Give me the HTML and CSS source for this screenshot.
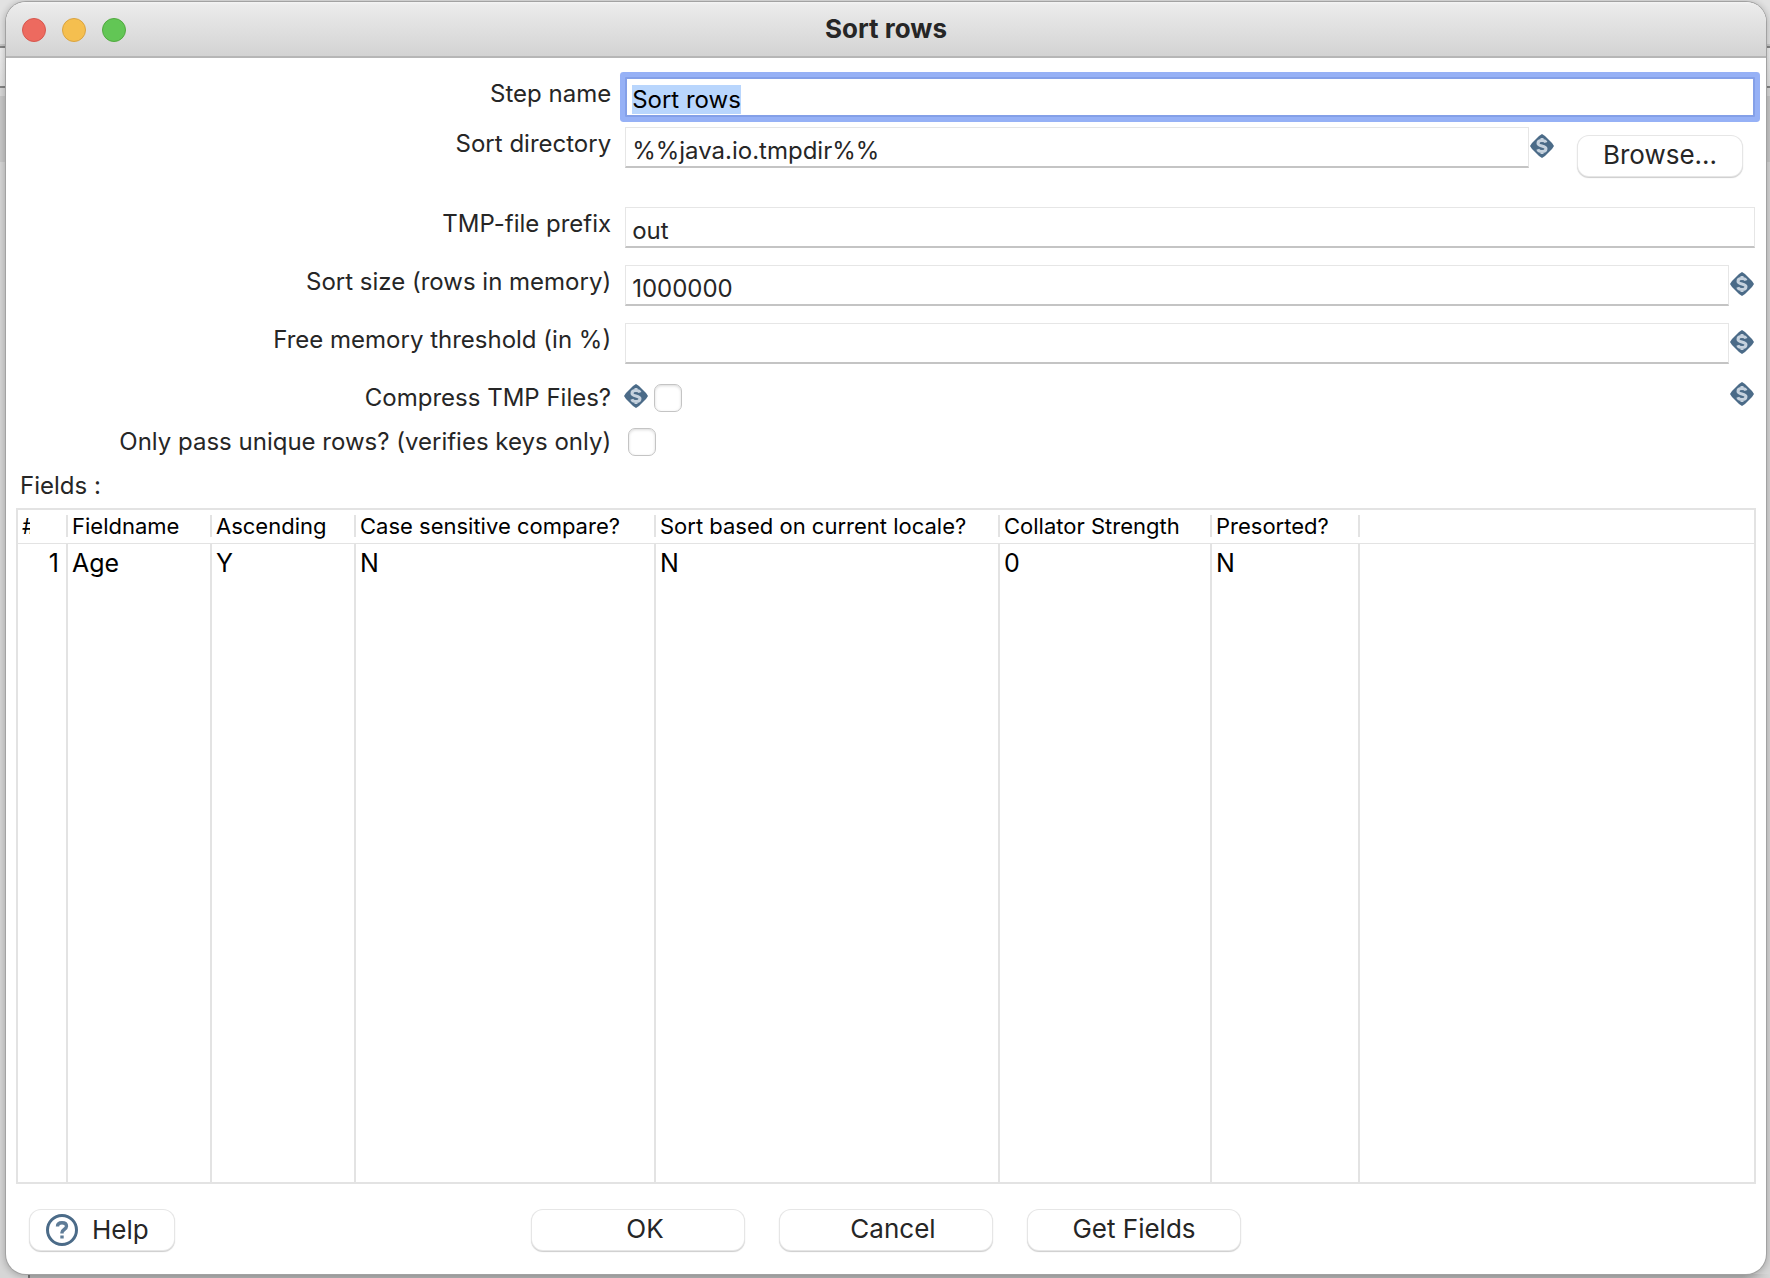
FILE: index.html
```html
<!DOCTYPE html>
<html lang="en">
<head>
<meta charset="utf-8">
<title>Sort rows</title>
<link rel="stylesheet" href="styles.css">
</head>
<body>
<svg class="defs" width="0" height="0" aria-hidden="true">
  <symbol id="variable" viewBox="0 0 24 24">
    <path d="M12 0 L15 2 L22 9 L24 12 L22 15 L15 22 L12 24 L9 22 L2 15 L0 12 L2 9 L9 2 Z" fill="#4b6b88"/>
    <path d="M16 8.500C15.500 7 14 6.500 12 6.500C9.500 6.500 8 7.500 8 9.200C8 13 16 10.800 16 14.800C16 16.500 14.500 17.500 12 17.500C9.800 17.500 8.300 16.800 7.800 15.300M12 4V6.500M12 17.500V20" fill="none" stroke="#c6d2de" stroke-width="3"/>
  </symbol>
</svg>
<main class="window">
  <header class="titlebar">
    <div class="lights">
      <button class="light light-close" type="button" aria-label="Close"></button>
      <button class="light light-minimize" type="button" aria-label="Minimize"></button>
      <button class="light light-zoom" type="button" aria-label="Zoom"></button>
    </div>
    <h1 class="title">Sort rows</h1>
  </header>
  <form class="form">
    <div class="row row-step">
      <label class="label" for="step">Step name</label>
      <div class="control"><input class="text text-focus" id="step" type="text" value="Sort rows"></div>
    </div>
    <div class="row row-directory">
      <label class="label" for="directory">Sort directory</label>
      <div class="control">
        <input class="text" id="directory" type="text" value="%%java.io.tmpdir%%">
        <svg class="variable"><use href="#variable"/></svg>
        <button class="button browse" type="button">Browse...</button>
      </div>
    </div>
    <div class="row">
      <label class="label" for="prefix">TMP-file prefix</label>
      <div class="control"><input class="text" id="prefix" type="text" value="out"></div>
    </div>
    <div class="row">
      <label class="label" for="size">Sort size (rows in memory)</label>
      <div class="control">
        <input class="text" id="size" type="text" value="1000000">
        <svg class="variable"><use href="#variable"/></svg>
      </div>
    </div>
    <div class="row">
      <label class="label" for="threshold">Free memory threshold (in %)</label>
      <div class="control">
        <input class="text" id="threshold" type="text">
        <svg class="variable"><use href="#variable"/></svg>
      </div>
    </div>
    <div class="row row-check">
      <label class="label" for="compress">Compress TMP Files?</label>
      <div class="control control-compress">
        <svg class="variable"><use href="#variable"/></svg>
        <input class="check" id="compress" type="checkbox">
        <svg class="variable variable-end"><use href="#variable"/></svg>
      </div>
    </div>
    <div class="row row-check">
      <label class="label" for="unique">Only pass unique rows? (verifies keys only)</label>
      <div class="control control-unique"><input class="check" id="unique" type="checkbox"></div>
    </div>
  </form>
  <h2 class="caption" id="fields">Fields :</h2>
  <div class="grid">
    <table class="table" aria-labelledby="fields">
      <colgroup>
        <col class="col-number"><col class="col-name"><col class="col-name"><col class="col-case">
        <col class="col-locale"><col class="col-strength"><col class="col-presorted"><col>
      </colgroup>
      <thead>
        <tr>
          <th><span class="head head-number">#</span></th>
          <th><span class="head">Fieldname</span></th>
          <th><span class="head">Ascending</span></th>
          <th><span class="head">Case sensitive compare?</span></th>
          <th><span class="head">Sort based on current locale?</span></th>
          <th><span class="head">Collator Strength</span></th>
          <th><span class="head">Presorted?</span></th>
          <th></th>
        </tr>
      </thead>
      <tbody>
        <tr>
          <td class="number">1</td><td>Age</td><td>Y</td><td>N</td><td>N</td><td>0</td><td>N</td><td></td>
        </tr>
      </tbody>
    </table>
  </div>
  <footer class="footer">
    <button class="button help" type="button">
      <svg class="help-icon" viewBox="0 0 32 32" aria-hidden="true">
        <circle cx="16" cy="16" r="14.500" fill="none" stroke="#4b6b88" stroke-width="3"/>
        <path d="M11.500 12.500C11.500 10 13.300 8.700 16 8.700C18.700 8.700 20.500 10 20.500 12.300C20.500 15.500 16 15.500 16 18.500V19.500M16 21.500V24.500" fill="none" stroke="#5f7c97" stroke-width="3.400"/>
      </svg>
      Help
    </button>
    <div class="actions">
      <button class="button action action-indent" type="button">OK</button>
      <button class="button action action-indent" type="button">Cancel</button>
      <button class="button action" type="button">Get Fields</button>
    </div>
  </footer>
</main>
<script src="script.js"></script>
</body>
</html>
```
FILE: styles.css
```css
* { box-sizing: border-box; }

html, body { height: 100%; margin: 0; }

body {
  padding: 2px 4px 4px 6px;
  overflow: hidden;
  font-family: Inter, "Liberation Sans", sans-serif;
  font-size: 24px;
  color: #262626;
  background:
    linear-gradient(90deg, transparent 28px, #777 28px 30px, #b4b4b4 30px calc(100% - 28px), transparent) left bottom / 100% 4px no-repeat,
    linear-gradient(#e2e2e2 0 44px, #c8c8c8 44px 46px, #848484 46px 48px, #eeeeee 48px, #e2e2e2 86px, #848484 86px 88px, #d8d8d8 88px 96px, #c8c8c8 96px 162px, #d6d6d6 162px);
}

.defs { position: absolute; }

.window {
  display: flex;
  flex-direction: column;
  height: 100%;
  border-radius: 20px;
  background: #fff;
  box-shadow: 0 0 0 1px #a2a2a2, 0 1px 6px 2px rgba(0, 0, 0, .2);
  overflow: hidden;
}

.titlebar {
  display: grid;
  grid-template-columns: 1fr auto 1fr;
  align-items: center;
  flex: none;
  height: 56px;
  padding: 0 16px;
  border-bottom: 2px solid #b6b6b6;
  background: linear-gradient(#f4f4f4, #ebebeb 3px, #d3d3d3);
}

.lights { display: flex; gap: 16px; padding-top: 2px; }

.light {
  width: 24px;
  height: 24px;
  padding: 0;
  border: 1px solid #d6574e;
  border-radius: 50%;
  background: #ed6a5f;
}

.light-minimize { border-color: #d9a341; background: #f5bf4f; }
.light-zoom { border-color: #51a93f; background: #62c655; }

.title { margin: 0; font-size: 26px; line-height: 32px; font-weight: 700; }

.form { flex: none; padding: 19px 11px 0 0; }

.row {
  display: grid;
  grid-template-columns: 35% minmax(0, 1fr);
  height: 40px;
  margin-bottom: 18px;
}

.row-step { margin-bottom: 10px; }
.row-directory { margin-bottom: 40px; }
.row-check { height: 44px; margin-bottom: 0; }

.label {
  padding: 2px 7px 0 0;
  line-height: 30px;
  text-align: right;
  white-space: nowrap;
}

.control { display: flex; align-items: flex-start; padding-left: 7px; }

.text {
  flex: 1;
  min-width: 0;
  height: 41px;
  padding: 6px 6px 0;
  border: 1px solid #e6e6e6;
  border-bottom: 2px solid #c4c4c4;
  outline: none;
  background: #fff;
  font: inherit;
  line-height: 32px;
  color: inherit;
}

.text-focus {
  height: 40px;
  border: 2px solid #84a0e8;
  box-shadow: 0 0 0 5px #96b1f6;
  border-radius: 1px;
  padding: 4px 5px 0;
  color: #000;
}

.text::selection { background: #b9d6fd; color: #000; }

.variable { flex: none; width: 24px; height: 24px; margin: 7px 1px 0; }

.button {
  height: 40px;
  padding: 0 0 2px;
  border: 0;
  border-radius: 11px;
  background: #fff;
  box-shadow: 0 0 0 1px #e6e6e6, 0 1px 1px 1px rgba(0, 0, 0, .2);
  font: inherit;
  font-size: 26px;
  line-height: 38px;
  color: inherit;
}

.browse { flex: none; width: 164px; margin: 9px 13px 0 23px; }

.check {
  appearance: none;
  width: 28px;
  height: 28px;
  margin: 0;
  border: 1px solid #c4c4c4;
  border-radius: 7px;
  background: #fff;
  box-shadow: inset 0 1px 3px rgba(0, 0, 0, .15);
}

.control-compress { gap: 6px; padding: 3px 0 0 6px; }
.control-compress .variable { margin: 0; }
.control-compress .variable-end { margin: -2px 1px 0 auto; }
.control-unique { padding: 3px 0 0 10px; }

.caption {
  flex: none;
  margin: 0;
  padding: 2px 14px 7px;
  font-size: 24px;
  line-height: 30px;
  font-weight: 400;
}

.grid {
  flex: 1;
  min-height: 80px;
  margin: 0 10px;
  border: 2px solid #e3e3e3;
}

.table {
  width: 100%;
  height: 100%;
  table-layout: fixed;
  border-collapse: separate;
  border-spacing: 0;
  color: #000;
}

.col-number { width: 50px; }
.col-name { width: 144px; }
.col-case { width: 300px; }
.col-locale { width: 344px; }
.col-strength { width: 212px; }
.col-presorted { width: 148px; }

.table th {
  height: 34px;
  padding: 5px 0 6px;
  border-bottom: 1px solid #e3e3e3;
  font-size: 22px;
  line-height: 22px;
  font-weight: 400;
  text-align: left;
}

.head {
  display: block;
  padding-left: 4px;
  border-right: 2px solid #e3e3e3;
  white-space: nowrap;
}

.head-number { padding-right: 36px; overflow: clip; overflow-clip-margin: content-box; }

.table td {
  padding: 3px 4px 0;
  border-right: 2px solid #e3e3e3;
  font-size: 25px;
  line-height: 32px;
  vertical-align: top;
}

.table td:last-child { border-right: 0; }
.table .number { padding-right: 7px; text-align: right; }

.footer {
  display: grid;
  grid-template-columns: 1fr auto 1fr;
  flex: none;
  padding: 26px 24px 24px;
}

.help {
  display: flex;
  align-items: center;
  gap: 14px;
  width: 144px;
  padding: 0 0 0 16px;
}

.help-icon { width: 32px; height: 32px; }

.actions { display: flex; gap: 36px; }
.action { width: 212px; }
.action-indent { padding-left: 14px; }
```
FILE: script.js
```js
const step = document.getElementById("step");
step.focus();
step.select();
```
